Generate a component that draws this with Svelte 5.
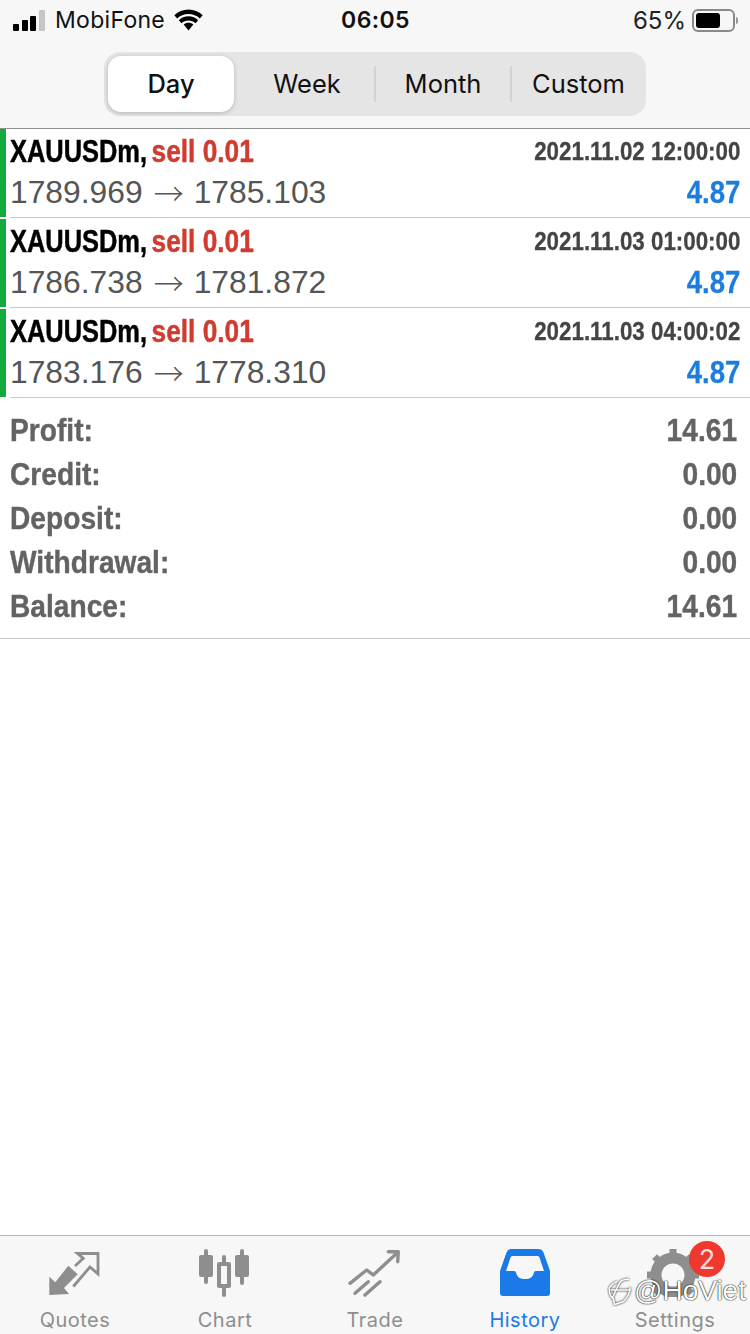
<script>
  const deals = [
    { open: '1789.969', close: '1785.103', time: '2021.11.02 12:00:00' },
    { open: '1786.738', close: '1781.872', time: '2021.11.03 01:00:00' },
    { open: '1783.176', close: '1778.310', time: '2021.11.03 04:00:02' }
  ];
  const totals = [
    ['Profit:', '14.61'],
    ['Credit:', '0.00'],
    ['Deposit:', '0.00'],
    ['Withdrawal:', '0.00'],
    ['Balance:', '14.61']
  ];
  const segments = ['Day', 'Week', 'Month', 'Custom'];
</script>

<div class="screen">
  <header class="top">
    <div class="status">
      <div class="status-left">
        <span class="signal"><i class="b1"></i><i class="b2"></i><i class="b3"></i><i class="b4"></i></span>
        <span class="carrier">MobiFone</span>
        <svg class="wifi" width="29" height="22" viewBox="2 1 26 20">
          <path d="M15 5.500c4 0 7.600 1.500 10.300 4.100l2.600-2.900C24.500 3.400 20 1.500 15 1.500S5.500 3.400 2.100 6.700l2.600 2.900C7.400 7 11 5.500 15 5.500z" fill="#000"/>
          <path d="M15 11.500c2.400 0 4.600.9 6.300 2.500l2.500-2.800C21.500 9 18.400 7.700 15 7.700s-6.500 1.300-8.800 3.500L8.700 14c1.700-1.600 3.900-2.500 6.300-2.500z" fill="#000"/>
          <path d="M15 13.500c-1.700 0-3.200.6-4.400 1.700L15 20.500l4.400-5.300c-1.200-1.100-2.700-1.700-4.400-1.700z" fill="#000"/>
        </svg>
      </div>
      <span class="clock">06:05</span>
      <div class="status-right">
        <span class="pct">65%</span>
        <span class="battery"><span class="charge"></span></span>
        <span class="nub"></span>
      </div>
    </div>
    <div class="seg-wrap">
      <div class="seg">
        {#each segments as s, i}
          <div class="seg-item" class:divided={i > 1}>
            {#if i === 0}
              <span class="pill">{s}</span>
            {:else}
              {s}
            {/if}
          </div>
        {/each}
      </div>
    </div>
  </header>

  <section class="deals">
    {#each deals as d}
      <div class="deal">
        <div class="mark"></div>
        <div class="deal-body">
          <div class="line one">
            <span class="title">XAUUSDm, <em>sell 0.01</em></span>
            <span class="time">{d.time}</span>
          </div>
          <div class="line two">
            <span class="prices">{d.open}<span class="arrow">→</span>{d.close}</span>
            <span class="gain">4.87</span>
          </div>
        </div>
      </div>
    {/each}
  </section>

  <section class="totals">
    {#each totals as t}
      <div class="total"><span class="label">{t[0]}</span><span class="amount">{t[1]}</span></div>
    {/each}
  </section>

  <div class="spacer"></div>

  <nav class="tabs">
    <div class="tab">
      <svg width="56" height="48" viewBox="0 0 56 48">
        <path d="M2.300 46V27.700l6 5.600 13-16.600 9.400 8.600L17 39l5 6z" fill="#8e8e8e"/>
        <path d="M28 17l8.300-7.700-5.800-4.800H51V25l-8-7-16.700 19.500" fill="none" stroke="#8e8e8e" stroke-width="2.800"/>
      </svg>
      <span>Quotes</span>
    </div>
    <div class="tab">
      <svg width="56" height="48" viewBox="0 0 56 48">
        <g fill="#8e8e8e">
          <rect x="7" y="0" width="4" height="35" rx="2"/>
          <rect x="2" y="6" width="14" height="22" rx="2"/>
          <rect x="25" y="6" width="4" height="42" rx="2"/>
          <rect x="20" y="13" width="14" height="26" rx="2"/>
          <rect x="43" y="0" width="4" height="36" rx="2"/>
          <rect x="38" y="6" width="14" height="22" rx="2"/>
        </g>
        <rect x="24" y="17" width="6" height="18" fill="#f7f7f7"/>
      </svg>
      <span>Chart</span>
    </div>
    <div class="tab">
      <svg width="56" height="48" viewBox="0 0 56 48">
        <g fill="none" stroke="#8e8e8e" stroke-width="3.400" stroke-linecap="round" stroke-linejoin="round">
          <path d="M3 34.300L19.700 21l6.600 5L49.700 4.300"/>
          <path d="M41.300 2.700h10l-.6 10"/>
          <path d="M8 44.300L21.300 32.700"/>
          <path d="M18 46l15-13.300"/>
        </g>
      </svg>
      <span>Trade</span>
    </div>
    <div class="tab current">
      <svg width="56" height="48" viewBox="0 0 56 48">
        <path d="M15 0h26c3 0 4.500 1 5.500 3.500L53 22v22c0 2-1 3-3 3H6c-2 0-3-1-3-3V22l6.500-18.500C10.500 1 12 0 15 0z" fill="#1a7be8"/>
        <path d="M16 7h24c1.500 0 2 .5 2.500 1.500L47 22H39c-1.500 0-2 1-2.500 3-1 3-3.500 5-8.500 5s-7.500-2-8.500-5c-.5-2-1-3-2.500-3H9l4.500-13.500C14 7.500 14.500 7 16 7z" fill="#f7f7f7"/>
      </svg>
      <span>History</span>
    </div>
    <div class="tab">
      <svg width="56" height="48" viewBox="0 0 56 48">
        <circle cx="26" cy="26" r="17" fill="none" stroke="#8e8e8e" stroke-width="11"/>
        <path d="M26 0v7M26 45v7M0 26h7M45 26h7M7.600 7.600l5 5M39.400 39.400l5 5M7.600 44.400l5-5M39.400 12.600l5-5" stroke="#8e8e8e" stroke-width="7"/>
      </svg>
      <span>Settings</span>
      <b class="badge">2</b>
    </div>
    <div class="watermark">
      <svg width="28" height="30" viewBox="0 0 28 30">
        <g fill="none" stroke="#fff" stroke-width="1.500" stroke-linecap="round" stroke-linejoin="round">
          <path d="M10.700 5.700C6 8 3 11 3.300 14c.2 4 1.700 7 4 8.300l1.200 6.200 8.500-2.800c3-2.700 7-7.700 7-13.700"/>
          <path d="M22.500 3.300C17 3 14 5 12.500 9L10 14c-1 3-2 5-4 8"/>
          <path d="M5 14h19"/>
        </g>
      </svg>
      <span>@HoViet</span>
    </div>
  </nav>
</div>

<style>
  :global(body) {
    margin: 0;
    background: #fff;
  }
  .screen {
    width: 750px;
    height: 1334px;
    display: flex;
    flex-direction: column;
    overflow: hidden;
    font-family: Inter, "Liberation Sans", sans-serif;
    background: #fff;
  }
  .top {
    height: 129px;
    box-sizing: border-box;
    flex: none;
    background: #f7f7f7;
    border-bottom: 1px solid #8f8f8f;
  }
  .status {
    height: 40px;
    display: grid;
    grid-template-columns: 1fr auto 1fr;
    align-items: center;
    padding: 0 12px 0 13px;
    color: #111;
    font-size: 23px;
  }
  .status-left {
    display: flex;
    align-items: center;
  }
  .signal {
    display: flex;
    align-items: flex-end;
    gap: 2.500px;
    width: 33px;
    height: 21px;
  }
  .signal i {
    display: block;
    width: 6px;
    background: #000;
    border-radius: 1px;
  }
  .b1 { height: 7px; }
  .b2 { height: 11px; }
  .b3 { height: 15px; }
  .b4 { height: 21px; background: #c6c6c6 !important; }
  .carrier {
    margin-left: 9px;
    letter-spacing: 0.300px;
  }
  .wifi {
    margin-left: 9px;
  }
  .clock {
    font-weight: 600;
    letter-spacing: 0.400px;
  }
  .status-right {
    display: flex;
    align-items: center;
    justify-content: flex-end;
  }
  .pct {
    margin-right: 6px;
    color: #222;
    font-size: 24px;
  }
  .battery {
    display: block;
    box-sizing: border-box;
    width: 43px;
    height: 23px;
    padding: 2px;
    border: 2px solid #8a8a8a;
    border-radius: 6px;
  }
  .charge {
    display: block;
    width: 24px;
    height: 15px;
    background: #000;
    border-radius: 3px;
  }
  .nub {
    width: 2px;
    height: 7px;
    margin-left: 1px;
    background: #999;
    border-radius: 0 2px 2px 0;
  }
  .seg-wrap {
    display: flex;
    justify-content: center;
    padding-top: 12px;
  }
  .seg {
    width: 542px;
    height: 64px;
    padding: 4px 0 4px 4px;
    box-sizing: border-box;
    display: grid;
    grid-template-columns: 131px 136px 136px 1fr;
    align-items: center;
    background: #e5e5e5;
    border-radius: 16px;
  }
  .seg-item {
    height: 56px;
    box-sizing: border-box;
    display: flex;
    align-items: center;
    justify-content: center;
    position: relative;
    padding-bottom: 2px;
    font-size: 25.500px;
    color: #111;
  }
  .seg-item:first-child {
    padding-bottom: 0;
  }
  .pill {
    width: 126px;
    height: 56px;
    box-sizing: border-box;
    margin-right: 5px;
    padding-bottom: 2px;
    display: flex;
    align-items: center;
    justify-content: center;
    background: #fff;
    border-radius: 13px;
    font-weight: 500;
    box-shadow: 0 1px 4px rgba(0, 0, 0, 0.22);
  }
  .seg-item.divided::before {
    content: "";
    position: absolute;
    left: -1px;
    top: 10px;
    bottom: 10px;
    width: 2px;
    background: #d2d2d2;
  }
  .deal {
    height: 90px;
    display: flex;
    box-sizing: border-box;
  }
  .mark {
    width: 6px;
    height: 88px;
    background: #12ab3c;
    flex: none;
  }
  .deal-body {
    flex: 1;
    margin-left: 4px;
    border-bottom: 1px solid #c8c8c8;
    padding: 0 10px 0 0;
    height: 89px;
    box-sizing: border-box;
    font-family: "Liberation Sans", Arial, sans-serif;
  }
  .line {
    display: flex;
    justify-content: space-between;
    align-items: center;
  }
  .one {
    height: 45px;
  }
  .two {
    height: 38px;
  }
  .title {
    display: inline-block;
    font-size: 31px;
    font-weight: 700;
    color: #000;
    white-space: pre;
    -webkit-text-stroke: 0.5px currentColor;
    transform: scaleX(0.82);
    transform-origin: left center;
  }
  .title em {
    font-style: normal;
    font-size: 32px;
    margin-left: -3px;
    color: #d03c2f;
  }
  .time {
    display: inline-block;
    font-size: 25.500px;
    font-weight: 700;
    color: #444;
    white-space: pre;
    -webkit-text-stroke: 0.3px currentColor;
    transform: scaleX(0.876);
    transform-origin: right center;
  }
  .prices {
    font-size: 31.800px;
    color: #555;
    display: flex;
    align-items: center;
    margin-top: -2px;
  }
  .arrow {
    font-family: "Noto Sans CJK SC", sans-serif;
    font-size: 30px;
    line-height: 1;
    margin: 0 10px 0 11px;
    font-weight: 300;
  }
  .gain {
    display: inline-block;
    font-size: 31px;
    font-weight: 700;
    color: #1c7ddf;
    -webkit-text-stroke: 0.3px currentColor;
    transform: scaleX(0.89);
    transform-origin: right center;
  }
  .totals {
    height: 240px;
    box-sizing: border-box;
    flex: none;
    padding: 9px 13px 0 10px;
    border-bottom: 1px solid #c8c8c8;
    font-family: "Liberation Sans", Arial, sans-serif;
  }
  .total {
    height: 44px;
    display: flex;
    align-items: center;
    justify-content: space-between;
    font-size: 32px;
    font-weight: 700;
    color: #636363;
    -webkit-text-stroke: 0.4px currentColor;
  }
  .label,
  .amount {
    display: inline-block;
    transform: scaleX(0.88);
  }
  .label {
    transform-origin: left center;
  }
  .amount {
    transform-origin: right center;
  }
  .spacer {
    flex: 1;
  }
  .tabs {
    height: 99px;
    flex: none;
    box-sizing: border-box;
    position: relative;
    display: grid;
    grid-template-columns: repeat(5, 150px);
    background: #f7f7f7;
    border-top: 1px solid #b4b4b4;
  }
  .tab {
    position: relative;
    display: flex;
    flex-direction: column;
    align-items: center;
    padding-top: 13px;
    font-size: 20px;
    color: #8e8e8e;
  }
  .tab svg {
    display: block;
  }
  .tab span {
    margin-top: 10px;
    line-height: 26px;
    letter-spacing: 0.500px;
  }
  .tab.current {
    color: #1a7be8;
  }
  .badge {
    position: absolute;
    top: 5px;
    left: 89px;
    width: 36px;
    height: 36px;
    border-radius: 50%;
    background: #f0392e;
    color: #fdd;
    font-size: 27px;
    font-weight: 400;
    display: flex;
    align-items: center;
    justify-content: center;
  }
  .watermark {
    position: absolute;
    left: 606px;
    top: 39px;
    display: flex;
    align-items: center;
    gap: 0;
    color: #fff;
    font-family: "Liberation Sans", Arial, sans-serif;
    font-size: 28px;
    font-weight: 400;
    text-shadow: 0 0 1.500px #000, 0 0 1px #000;
  }
  .watermark svg {
    filter: drop-shadow(0 0 0.800px #000);
  }
</style>
